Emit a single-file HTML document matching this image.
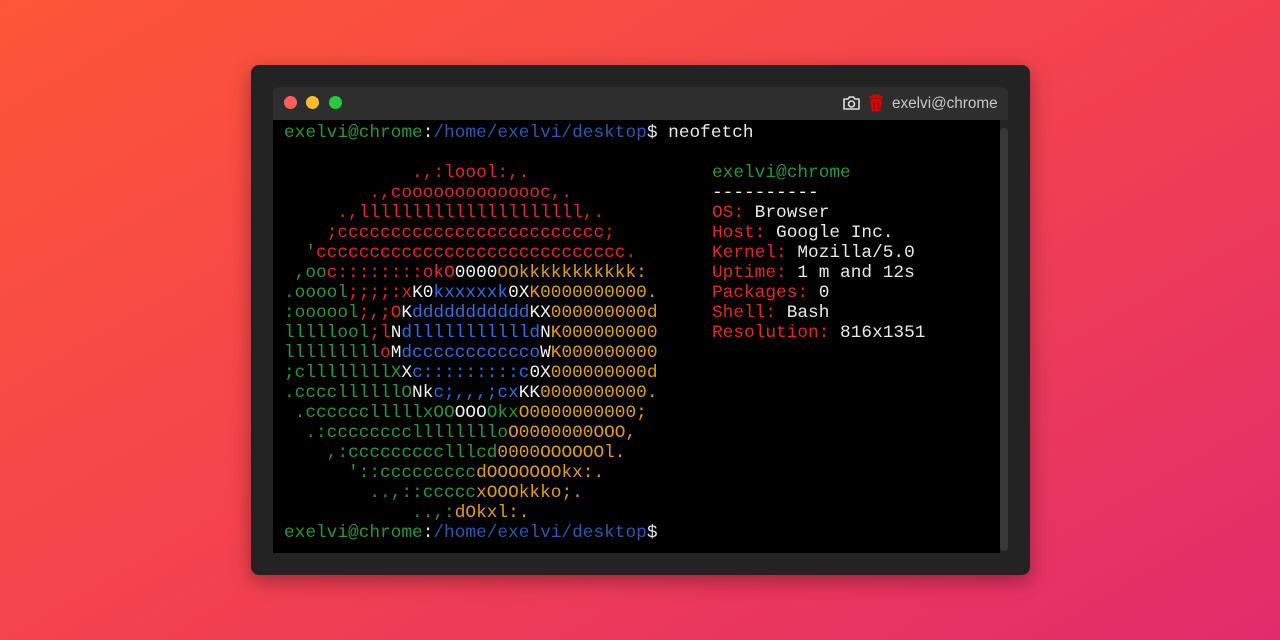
<!DOCTYPE html>
<html><head><meta charset="utf-8"><style>
html,body{margin:0;padding:0;width:1280px;height:640px;overflow:hidden}
body{background:linear-gradient(150deg,#fd5637 0%,#f3424f 50%,#e12c6c 100%);position:relative;font-family:"Liberation Sans",sans-serif}
.frame{position:absolute;left:251px;top:65px;width:779px;height:510px;background:#232323;border-radius:8px;box-shadow:0 6px 20px rgba(0,0,0,.35)}
.title{position:absolute;left:273px;top:87px;width:735px;height:33px;background:#2e2e2e;border-radius:6px 6px 0 0}
.dot{position:absolute;top:96px;width:13px;height:13px;border-radius:50%}
.body{position:absolute;left:273px;top:120px;width:727px;height:433px;background:#000}
.track{position:absolute;left:1000px;top:120px;width:8px;height:433px;background:#242424}
.thumb{position:absolute;left:1000px;top:128px;width:8px;height:423px;background:#383838;border-radius:4px}
.ttl{position:absolute;left:892px;top:94px;color:#c8c8c8;font-size:15.3px;line-height:20px}
pre{position:absolute;margin:0;font-family:"Liberation Mono",monospace;font-size:17.8px;line-height:20px;color:#e8e8e8}
.g{color:#27983a}.r{color:#de2a22}.b{color:#2f6ee0}.y{color:#e39c10}.w{color:#f0f0f0}.p{color:#2c58b0}
</style></head><body>
<div class="frame"></div>
<div class="title"></div>
<div class="dot" style="left:284px;background:#ff5f56"></div>
<div class="dot" style="left:306px;background:#ffbd2e"></div>
<div class="dot" style="left:329px;background:#27c93f"></div>
<svg style="position:absolute;left:842px;top:95px" width="19" height="16" viewBox="0 0 19 16"><path d="M2 4h4l1.5-2h4L13 4h4v10H2z" fill="none" stroke="#ddd" stroke-width="1.6" stroke-linejoin="round"/><circle cx="9.5" cy="9" r="3" fill="none" stroke="#ddd" stroke-width="1.6"/></svg>
<svg style="position:absolute;left:868px;top:94px" width="16" height="18" viewBox="0 0 16 18"><path d="M1 3h14M5.5 3V1.5h5V3" stroke="#d00" stroke-width="1.8" fill="none"/><path d="M2.5 4.5h11l-1 12.5h-9z" fill="#d00"/><path d="M6 7v8M10 7v8" stroke="#600" stroke-width="1"/></svg>
<div class="ttl">exelvi@chrome</div>
<div class="body"></div>
<div class="track"></div>
<div class="thumb"></div>
<pre style="left:284px;top:123px"><span class="g">exelvi@chrome</span>:<span class="p">/home/exelvi/desktop</span>$ neofetch

<span class="r">            .,:loool:,.</span>
<span class="r">        .,coooooooooooooc,.</span>
<span class="r">     .,lllllllllllllllllllll,.</span>
<span class="r">    ;ccccccccccccccccccccccccc;</span>
<span class="g">  '</span><span class="r">ccccccccccccccccccccccccccccc.</span>
<span class="g"> ,oo</span><span class="r">c::::::::okO</span><span class="w">0000</span><span class="y">OOkkkkkkkkkkk:</span>
<span class="g">.ooool</span><span class="r">;;;;:x</span><span class="w">K0</span><span class="b">kxxxxxk</span><span class="w">0X</span><span class="y">K0000000000.</span>
<span class="g">:oooool</span><span class="r">;,;O</span><span class="w">K</span><span class="b">ddddddddddd</span><span class="w">KX</span><span class="y">000000000d</span>
<span class="g">lllllool</span><span class="r">;l</span><span class="w">N</span><span class="b">dllllllllllld</span><span class="w">N</span><span class="y">K000000000</span>
<span class="g">lllllllll</span><span class="r">o</span><span class="w">M</span><span class="b">dccccccccccco</span><span class="w">W</span><span class="y">K000000000</span>
<span class="g">;cllllllllX</span><span class="w">X</span><span class="b">c:::::::::c</span><span class="w">0X</span><span class="y">000000000d</span>
<span class="g">.ccccllllllO</span><span class="w">Nk</span><span class="b">c;,,,;cx</span><span class="w">KK</span><span class="y">0000000000.</span>
<span class="g"> .cccccclllllxOO</span><span class="w">OOO</span><span class="g">Okx</span><span class="y">O0000000000;</span>
<span class="g">  .:ccccccccllllllllo</span><span class="y">O0000000OOO,</span>
<span class="g">    ,:ccccccccclllcd</span><span class="y">0000OOOOOOl.</span>
<span class="g">      '::ccccccccc</span><span class="y">dOOOOOOOkx:.</span>
<span class="g">        ..,::ccccc</span><span class="y">xOOOkkko;.</span>
<span class="g">            ..,:</span><span class="y">dOkxl:.</span>
<span class="g">exelvi@chrome</span>:<span class="p">/home/exelvi/desktop</span>$</pre>
<pre style="left:712px;top:163px"><span class="g">exelvi@chrome</span>
<span class="w">----------</span>
<span class="r">OS:</span> Browser
<span class="r">Host:</span> Google Inc.
<span class="r">Kernel:</span> Mozilla/5.0
<span class="r">Uptime:</span> 1 m and 12s
<span class="r">Packages:</span> 0
<span class="r">Shell:</span> Bash
<span class="r">Resolution:</span> 816x1351</pre>
</body></html>
